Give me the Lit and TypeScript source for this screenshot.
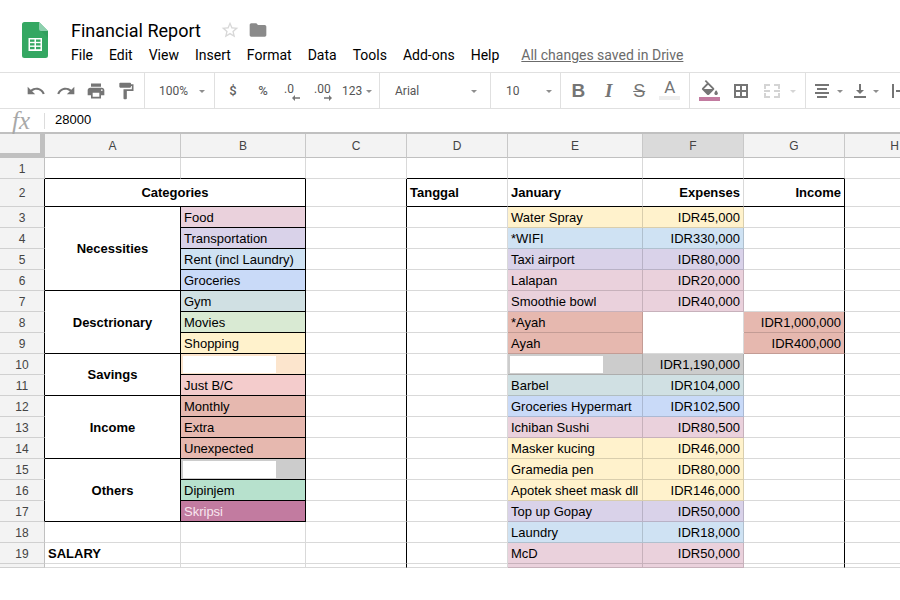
import { LitElement, html, css, svg } from "lit";
import { customElement } from "lit/decorators.js";

const ic = (d: string, cls = "") =>
  html`<svg class="ico ${cls}" viewBox="0 0 24 24" width="20" height="20"><path d="${d}"></path></svg>`;

const P = {
  undo: "M12.5 8c-2.65 0-5.05.99-6.9 2.6L2 7v9h9l-3.62-3.62c1.39-1.16 3.16-1.88 5.12-1.88 3.54 0 6.55 2.31 7.6 5.5l2.37-.78C21.08 11.03 17.15 8 12.5 8z",
  redo: "M18.4 10.6C16.55 8.99 14.15 8 11.5 8c-4.65 0-8.58 3.03-9.96 7.22L3.9 16c1.05-3.19 4.05-5.5 7.6-5.5 1.95 0 3.73.72 5.12 1.88L13 16h9V7l-3.6 3.6z",
  print: "M19 8H5c-1.66 0-3 1.34-3 3v6h4v4h12v-4h4v-6c0-1.66-1.34-3-3-3zm-3 11H8v-5h8v5zm3-7c-.55 0-1-.45-1-1s.45-1 1-1 1 .45 1 1-.45 1-1 1zm-1-9H6v4h12V3z",
  paint: "M18 4V3c0-.55-.45-1-1-1H5c-.55 0-1 .45-1 1v4c0 .55.45 1 1 1h12c.55 0 1-.45 1-1V6h1v4H9v11c0 .55.45 1 1 1h2c.55 0 1-.45 1-1v-9h8V4h-3z",
  star: "M22 9.24l-7.19-.62L12 2 9.19 8.63 2 9.24l5.46 4.73L5.82 21 12 17.27 18.18 21l-1.63-7.03L22 9.24zM12 15.4l-3.76 2.27 1-4.28-3.32-2.88 4.38-.38L12 6.1l1.71 4.04 4.38.38-3.32 2.88 1 4.28L12 15.4z",
  folder: "M10 4H4c-1.1 0-2 .9-2 2v12c0 1.1.9 2 2 2h16c1.1 0 2-.9 2-2V8c0-1.1-.9-2-2-2h-8l-2-2z",
  fill: "M16.56 8.94L7.62 0 6.21 1.41l2.38 2.38-5.15 5.15c-.59.59-.59 1.54 0 2.12l5.5 5.5c.29.29.68.44 1.06.44s.77-.15 1.06-.44l5.5-5.5c.59-.58.59-1.53 0-2.12zM5.21 10L10 5.21 14.79 10H5.21zM19 11.5s-2 2.17-2 3.5c0 1.1.9 2 2 2s2-.9 2-2c0-1.33-2-3.5-2-3.5z",
};

const caret = (cls = "") => html`<span class="caret ${cls}"></span>`;

const logo = html`<svg class="logo" viewBox="0 0 26 36" width="26" height="36">
  <path fill="#34a762" d="M2.5 0H17l9 9v24.5a2.5 2.5 0 0 1-2.5 2.5h-21A2.5 2.5 0 0 1 0 33.500V2.500A2.500 2.500 0 0 1 2.500 0z"></path>
  <path fill="#8dd0ae" d="M17 0l9 9h-7a2 2 0 0 1-2-2z"></path>
  <path fill="#2c9657" d="M19 9l7 7V9z" opacity=".5"></path>
  <rect x="6.500" y="16" width="13.500" height="13" fill="#fff"></rect>
  ${[0, 1, 2].map((r) =>
    [0, 1].map(
      (c) => svg`<rect x="${8 + c * 6}" y="${17.5 + r * 3.7}" width="4.500" height="2.300" fill="#34a762"></rect>`
    )
  )}
</svg>`;

type Cell = { t?: string; c?: string; r?: boolean };

const CAT: Cell[] = [
  { t: "Food", c: "pink" },
  { t: "Transportation", c: "purple" },
  { t: "Rent (incl Laundry)", c: "blue" },
  { t: "Groceries", c: "indigo" },
  { t: "Gym", c: "teal" },
  { t: "Movies", c: "green" },
  { t: "Shopping", c: "yellow" },
  { c: "peach", r: true },
  { t: "Just B/C", c: "rose" },
  { t: "Monthly", c: "red" },
  { t: "Extra", c: "red" },
  { t: "Unexpected", c: "red" },
  { c: "grey", r: true },
  { t: "Dipinjem", c: "mint" },
  { t: "Skripsi", c: "plum" },
];

const GROUPS: Record<number, [string, string]> = {
  3: ["Necessities", "s4"],
  7: ["Desctrionary", "s3"],
  10: ["Savings", "s2"],
  12: ["Income", "s3"],
  15: ["Others", "s3"],
};

const EXP: [string, string, string, string?][] = [
  ["Water Spray", "yellow", "IDR45,000"],
  ["*WIFI", "blue", "IDR330,000"],
  ["Taxi airport", "purple", "IDR80,000"],
  ["Lalapan", "pink", "IDR20,000"],
  ["Smoothie bowl", "pink", "IDR40,000"],
  ["*Ayah", "red", "", "IDR1,000,000"],
  ["Ayah", "red", "", "IDR400,000"],
  ["", "grey", "IDR1,190,000"],
  ["Barbel", "teal", "IDR104,000"],
  ["Groceries Hypermart", "indigo", "IDR102,500"],
  ["Ichiban Sushi", "pink", "IDR80,500"],
  ["Masker kucing", "yellow", "IDR46,000"],
  ["Gramedia pen", "yellow", "IDR80,000"],
  ["Apotek sheet mask dll", "yellow", "IDR146,000"],
  ["Top up Gopay", "purple", "IDR50,000"],
  ["Laundry", "blue", "IDR18,000"],
  ["McD", "pink", "IDR50,000"],
  ["", "pink", ""],
];

const redact = html`<div class="redact"></div>`;

@customElement("app-root")
export class AppRoot extends LitElement {
  static styles = css`
    :host { display: block; width: 900px; height: 568px; overflow: hidden; background: #fff; font-family: Roboto, "Liberation Sans", sans-serif; }
    .head { display: flex; height: 72px; box-sizing: border-box; border-bottom: 0; }
    .logo { margin: 22px 0 0 22px; flex: none; }
    .titles { margin-left: 23px; padding-top: 18px; }
    .title-row { display: flex; align-items: center; height: 24px; }
    .title { font-size: 18px; color: #000; width: 149px; white-space: nowrap; }
    .menu { display: flex; gap: 16px; margin-top: 3px; height: 20px; align-items: center; font-size: 14px; color: #000; white-space: nowrap; }
    .saved { margin-left: 6px; color: #6b6b6b; text-decoration: underline; }

    .toolbar { display: flex; height: 37px; box-sizing: border-box; border-top: 1px solid #e0e0e0; border-bottom: 1px solid #e0e0e0; overflow: hidden; }
    .grp { display: flex; align-items: center; box-sizing: border-box; border-right: 1px solid #e0e0e0; flex: none; font-size: 12px; color: #555; white-space: nowrap; }
    .g1 { width: 145px; padding-left: 21px; }
    .g2 { width: 70px; padding-left: 14px; padding-right: 9px; justify-content: space-between; }
    .g3 { width: 165px; padding-left: 3px; }
    .g4 { width: 111px; padding-left: 15px; padding-right: 13px; justify-content: space-between; }
    .g5 { width: 70px; padding-left: 15px; padding-right: 8px; justify-content: space-between; }
    .g6 { width: 129px; padding-left: 2px; }
    .g7 { width: 116px; }
    .g8 { flex: 1; border-right: 0; }
    .ico { fill: #757575; display: block; flex: none; }
    .ico.star { fill: #d8d8d8; }
    .ico.folder { fill: #8a8a8a; margin-left: 8px; }
    .btn { width: 30px; display: flex; justify-content: center; align-items: center; flex: none; }
    .caret { display: block; flex: none; width: 0; height: 0; border-left: 3px solid transparent; border-right: 3px solid transparent; border-top: 3px solid #8e8e8e; margin-top: 2px; }
    .caret.off { border-top-color: #d5d5d5; }
    .sym { font-size: 13px; color: #5f5f5f; font-weight: 500; }
    .dec { width: 30px; flex: none; display: flex; flex-direction: column; margin-top: 3px; font-size: 12px; line-height: 13px; padding-left: 6px; box-sizing: border-box; color: #555; }
    .arrow { display: block; margin-top: -1px; }
    .arrow.a1 { margin-left: 8px; }
    .arrow.a2 { margin-left: 10px; }
    .fmt { margin-left: 4px; margin-right: 4px; }
    .tb6 { width: 30.5px; flex: none; display: flex; flex-direction: column; align-items: center; color: #757575; line-height: 18px; font-size: 19px; }
    .b { font-family: "Liberation Sans", sans-serif; font-weight: 700; }
    .i { font-family: "Liberation Serif", serif; font-style: italic; font-weight: 700; }
    .s { font-family: "Liberation Sans", sans-serif; text-decoration: line-through; font-size: 18px; }
    .a { font-family: Roboto, sans-serif; font-size: 17px; line-height: 17px; margin-top: -2px; }
    .abar { width: 21px; height: 4px; background: #eeeeee; }
    .fillbtn { width: 38px; flex: none; display: flex; flex-direction: column; align-items: center; }
    .fillbar { width: 21px; height: 4px; background: #c27ba0; margin-top: 1px; }
    .w26 { width: 26px; flex: none; display: flex; justify-content: center; }
    .w36 { width: 36px; flex: none; display: flex; justify-content: center; }
    .w31 { width: 31px; flex: none; display: flex; justify-content: center; }
    .ml7 { margin-left: 7px; }
    .ml11 { margin-left: 11px; flex: none; }
    .ml13 { margin-left: 13px; flex: none; }

    .fbar { display: flex; align-items: center; height: 23px; }
    .fx { width: 44px; box-sizing: border-box; padding-left: 12px; font: italic 25px/23px "Liberation Serif", serif; color: #a8a8a8; flex: none; }
    .fsep { width: 1px; height: 16px; background: #dcdcdc; flex: none; }
    .fval { margin: -2px 0 0 10px; font: 13px "Liberation Sans", sans-serif; color: #000; }

    .sheet { border-top: 2px solid #c0c0c0; display: grid; width: 945px;
      grid-template-columns: 45px 136px 125px 101px 101px 135px 101px 101px 100px;
      grid-template-rows: 24px 21px 28px repeat(17, 21px) 4px;
      font: 13px "Liberation Sans", sans-serif; color: #000; }
    .sheet > div { box-sizing: border-box; border-right: 1px solid rgba(0,0,0,.15); border-bottom: 1px solid rgba(0,0,0,.15); display: flex; align-items: center; padding: 1px 2px 0 3px; white-space: nowrap; overflow: hidden; min-width: 0; min-height: 0; }
    .sheet > .ch { background: #f3f3f3; border-right: 1px solid #c8c8c8; border-bottom: 1px solid #c0c0c0; justify-content: center; font-size: 12px; color: #444; padding: 0; }
    .sheet > .ch.sel { background: #dadada; }
    .sheet > .corner { background: #f3f3f3; border-right: 5px solid #c0c0c0; border-bottom: 5px solid #c0c0c0; padding: 0; }
    .sheet > .rh { background: #f3f3f3; border-right: 1px solid #c0c0c0; border-bottom: 1px solid #d0d0d0; justify-content: center; font-size: 12px; color: #444; padding: 1px 0 0; }
    .sheet > .bb { border-bottom-color: #000; }
    .sheet > .br { border-right-color: #000; }
    .sheet > .nb { border-bottom-color: #fff; }
    .sheet > .bold { font-weight: 700; }
    .sheet > .hd { padding-top: 0; }
    .sheet > .ctr { justify-content: center; padding: 0; }
    .sheet > .rt { justify-content: flex-end; padding-right: 3px; }
    .sheet > .pad { align-items: flex-start; padding: 2px 0 0 2px; }
    .span2 { grid-column: span 2; }
    .s2 { grid-row: span 2; }
    .s3 { grid-row: span 3; }
    .s4 { grid-row: span 4; }
    .redact { width: 93px; height: 17px; background: #fff; flex: none; }
    .pink { background: #ead1dc; }
    .purple { background: #d9d2e9; }
    .blue { background: #cfe2f3; }
    .indigo { background: #c9daf8; }
    .teal { background: #d0e0e3; }
    .green { background: #d9ead3; }
    .yellow { background: #fff2cc; }
    .peach { background: #fce5cd; }
    .rose { background: #f4cccc; }
    .red { background: #e6b8af; }
    .grey { background: #cccccc; }
    .mint { background: #b7e1cd; }
    .sheet > .plum { background: #c27ba0; color: #f8e6ef; }
  `;

  private toolbar() {
    return html`<div class="toolbar">
      <div class="grp g1">
        <span class="btn">${ic(P.undo)}</span><span class="btn">${ic(P.redo)}</span>
        <span class="btn">${ic(P.print)}</span><span class="btn">${ic(P.paint)}</span>
      </div>
      <div class="grp g2"><span>100%</span>${caret()}</div>
      <div class="grp g3">
        <span class="btn sym">$</span><span class="btn sym">%</span>
        <span class="dec"><span>.0</span><svg class="arrow a1" width="8" height="6" viewBox="0 0 8 6"><path d="M8 2.300H3V0L0 3l3 3V3.700h5z" fill="#757575"></path></svg></span>
        <span class="dec"><span>.00</span><svg class="arrow a2" width="8" height="6" viewBox="0 0 8 6"><path d="M0 2.300h5V0l3 3-3 3V3.700H0z" fill="#757575"></path></svg></span>
        <span class="fmt">123</span>${caret()}
      </div>
      <div class="grp g4"><span>Arial</span>${caret()}</div>
      <div class="grp g5"><span>10</span>${caret()}</div>
      <div class="grp g6">
        <span class="tb6 b">B</span><span class="tb6 i">I</span><span class="tb6 s">S</span>
        <span class="tb6"><span class="a">A</span><span class="abar"></span></span>
      </div>
      <div class="grp g7">
        <span class="fillbtn">
          <svg viewBox="0 0 22 18" width="20" height="16" class="ico"><path d="${P.fill}"></path></svg>
          <span class="fillbar"></span>
        </span>
        <span class="w26"><svg width="14" height="14" viewBox="0 0 14 14" fill="none" stroke="#757575" stroke-width="2"><path d="M1 1h12v12H1zM7 1v12M1 7h12"></path></svg></span>
        <span class="w36"><svg width="16" height="14" viewBox="0 0 16 14" fill="none" stroke="#d4d4d4" stroke-width="2"><path d="M1 5V1h5M10 1h5v4M1 9v4h5M10 13h5V9M0 7h6M10 7h6"></path></svg></span>
        ${caret("off")}
      </div>
      <div class="grp g8">
        <span class="w31"><svg width="14" height="14" viewBox="0 0 14 14" fill="#757575"><path d="M0 0h14v2H0zM2 4h10v2H2zM0 8h14v2H0zM2 12h10v2H2z"></path></svg></span>
        ${caret()}
        <svg class="ml11" width="12" height="14" viewBox="0 0 12 14" fill="#757575"><path d="M0 12h12v2H0zM5 0h2v6h3l-4 4-4-4h3z"></path></svg>
        <span class="ml7">${caret()}</span>
        <svg class="ml13" width="8" height="14" viewBox="0 0 8 14" fill="#757575"><path d="M0 0h2v14H0zM4 6h4v2H4z"></path></svg>
      </div>
    </div>`;
  }

  private sheet() {
    const cols = ["A", "B", "C", "D", "E", "F", "G", "H"];
    const rows: unknown[] = [];
    rows.push(html`<div class="corner"></div>`);
    cols.forEach((c) => rows.push(html`<div class="ch ${c === "F" ? "sel" : ""}">${c}</div>`));
    // row 1
    rows.push(html`<div class="rh">1</div>`);
    rows.push(html`<div class="bb"></div><div class="bb"></div><div></div><div class="bb"></div><div class="bb"></div><div class="bb"></div><div class="bb"></div><div></div>`);
    // row 2
    rows.push(html`<div class="rh br">2</div>`);
    rows.push(html`<div class="span2 ctr bold bb br">Categories</div><div class="br"></div>
      <div class="bold hd bb">Tanggal</div><div class="bold hd bb">January</div><div class="bold hd rt bb">Expenses</div><div class="bold hd rt bb br">Income</div><div></div>`);
    for (let n = 3; n <= 20; n++) {
      rows.push(html`<div class="rh ${n <= 17 ? "br" : ""}">${n < 20 ? n : ""}</div>`);
      const g = GROUPS[n];
      if (g) rows.push(html`<div class="ctr bold bb br ${g[1]}">${g[0]}</div>`);
      if (n <= 17) {
        const c = CAT[n - 3];
        rows.push(html`<div class="bb br ${c.c} ${c.r ? "pad" : ""}">${c.r ? redact : c.t}</div>`);
      } else if (n === 19) {
        rows.push(html`<div class="bold">SALARY</div><div></div>`);
      } else {
        rows.push(html`<div></div><div></div>`);
      }
      rows.push(html`<div class="br"></div><div></div>`);
      const e = EXP[n - 3];
      const isRedact = n === 10;
      rows.push(html`<div class="${e[1]} ${isRedact ? "pad" : ""}">${isRedact ? redact : e[0]}</div>`);
      const white = n === 8 || n === 9;
      rows.push(html`<div class="rt ${white ? "" : e[1]} ${n === 8 ? "nb" : ""}">${e[2]}</div>`);
      rows.push(html`<div class="rt br ${e[3] ? "red" : ""}">${e[3] ?? ""}</div><div></div>`);
    }
    return html`<div class="sheet">${rows}</div>`;
  }

  render() {
    return html`
      <div class="head">
        ${logo}
        <div class="titles">
          <div class="title-row">
            <span class="title">Financial Report</span>
            ${ic(P.star, "star")}
            ${ic(P.folder, "folder")}
          </div>
          <div class="menu">
            <span>File</span><span>Edit</span><span>View</span><span>Insert</span><span>Format</span><span>Data</span><span>Tools</span><span>Add-ons</span><span>Help</span>
            <span class="saved">All changes saved in Drive</span>
          </div>
        </div>
      </div>
      ${this.toolbar()}
      <div class="fbar"><span class="fx">fx</span><span class="fsep"></span><span class="fval">28000</span></div>
      ${this.sheet()}
    `;
  }
}
